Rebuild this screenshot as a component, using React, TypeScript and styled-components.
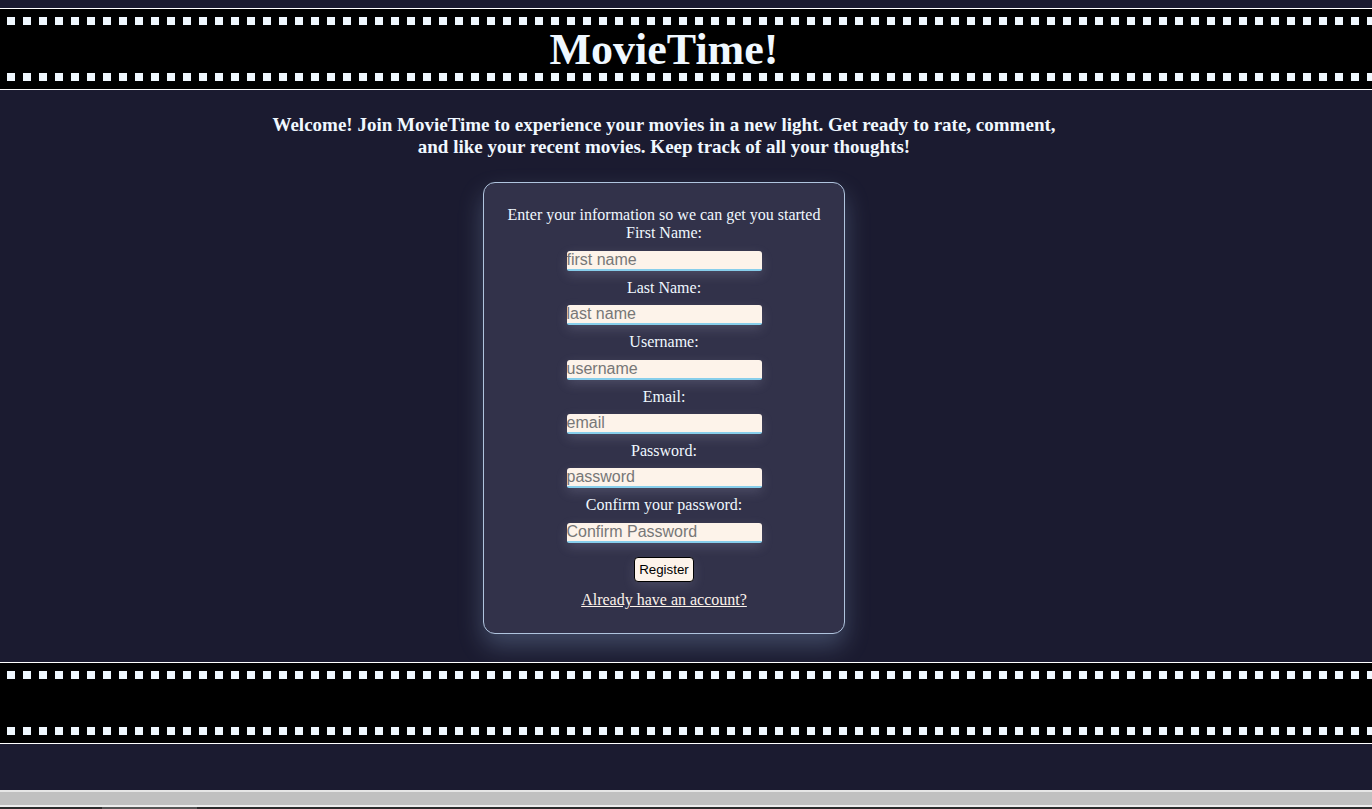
import React, { ReactElement } from "react"
import styled, { createGlobalStyle } from "styled-components"

const NAVY = "#1b1b30"
const PAPER = "#fdf3ea"
const ICE = "#f0f8ff"

const GlobalStyle = createGlobalStyle`
  html, body {
    margin: 0;
    padding: 0;
    background-color: ${NAVY};
  }
  body {
    font-family: "Liberation Serif", "Times New Roman", serif;
    color: ${ICE};
  }
`

const Page = styled.div`
  min-height: 100vh;
  display: flex;
  flex-direction: column;
  overflow: hidden;
`

// Film strip = black band with a row of sprocket holes top and bottom
const FilmStrip = styled.div<{ $offset?: number }>`
  margin-top: ${(p) => p.$offset ?? 0}px;
  height: 80px;
  border-top: 1px solid #ffffff;
  border-bottom: 1px solid #ffffff;
  background:
    linear-gradient(to right, ${ICE} 8px, transparent 8px) left 7px top 8px / 16px 8px repeat-x,
    linear-gradient(to right, ${ICE} 8px, transparent 8px) left 7px bottom 8px / 16px 8px repeat-x,
    #000000;
  display: flex;
  align-items: center;
  justify-content: center;
  padding-right: 44px;
`

const Title = styled.h1`
  margin: 0;
  font-size: 44px;
  font-weight: bold;
  color: ${ICE};
`

// Content is centred a little left of the window centre
const Main = styled.main`
  padding-right: 44px;
  display: flex;
  flex-direction: column;
  align-items: center;
`

const Welcome = styled.p`
  max-width: 790px;
  margin: 24px 0 24px;
  font-size: 19px;
  font-weight: bold;
  text-align: center;
  line-height: 22px;
`

const Card = styled.form`
  box-sizing: border-box;
  width: 362px;
  padding: 23px 20px 24px;
  border: 1px solid #b0c4de;
  border-radius: 12px;
  background-color: #32324a;
  box-shadow: 0 12px 24px rgba(150, 180, 220, 0.3);
  display: flex;
  flex-direction: column;
  align-items: center;
  text-align: center;
  font-size: 16px;
`

const Line = styled.span`
  display: block;
  line-height: 18.4px;
`

const Field = styled.input`
  box-sizing: border-box;
  width: 195px;
  height: 20px;
  margin: 8px 0;
  padding: 0;
  border: none;
  border-bottom: 2px solid #87ceeb;
  border-radius: 3px 3px 2px 2px;
  background-color: ${PAPER};
  font-family: "Liberation Sans", Arial, sans-serif;
  font-size: 16px;
  color: #222;
  box-shadow: 0 4px 12px rgba(200, 200, 230, 0.18);
  outline: none;

  &::placeholder {
    color: #777777;
  }
`

const Button = styled.button`
  margin: 6px 0 9px;
  padding: 4px 4px;
  border: 1px solid #000000;
  border-radius: 4px;
  background-color: ${PAPER};
  font-family: "Liberation Sans", Arial, sans-serif;
  font-size: 13.33px;
  color: #000000;
  box-shadow: 0 4px 12px rgba(200, 200, 230, 0.15);
  cursor: pointer;
`

const AccountLink = styled.a`
  display: block;
  line-height: 18.4px;
  color: ${PAPER};
  text-decoration: underline;
  cursor: pointer;
`

const Spacer = styled.div`
  flex: 1;
`

const Track = styled.div`
  height: 13px;
  border-top: 2px solid #e6e6e6;
  border-bottom: 2px solid #ededed;
  background-color: #c0c0c0;
`

const TrackEdge = styled.div`
  height: 2px;
  background-color: #2c2c2c;
  display: flex;
`

const Thumb = styled.div`
  margin-left: 102px;
  width: 95px;
  background-color: #555555;
`

interface FieldSpec {
  label: string
  placeholder: string
  type: string
}

const FIELDS: FieldSpec[] = [
  { label: "First Name:", placeholder: "first name", type: "text" },
  { label: "Last Name:", placeholder: "last name", type: "text" },
  { label: "Username:", placeholder: "username", type: "text" },
  { label: "Email:", placeholder: "email", type: "email" },
  { label: "Password:", placeholder: "password", type: "password" },
  { label: "Confirm your password:", placeholder: "Confirm Password", type: "password" },
]

const App = (): ReactElement => (
  <Page>
    <GlobalStyle />
    <FilmStrip $offset={8}>
      <Title>MovieTime!</Title>
    </FilmStrip>
    <Main>
      <Welcome>
        Welcome! Join MovieTime to experience your movies in a new light. Get ready to rate,
        comment, and like your recent movies. Keep track of all your thoughts!
      </Welcome>
      <Card onSubmit={(e) => e.preventDefault()}>
        <Line>Enter your information so we can get you started</Line>
        {FIELDS.map((f) => (
          <React.Fragment key={f.placeholder}>
            <Line>{f.label}</Line>
            <Field type={f.type} placeholder={f.placeholder} />
          </React.Fragment>
        ))}
        <Button type="submit">Register</Button>
        <AccountLink>Already have an account?</AccountLink>
      </Card>
    </Main>
    <FilmStrip $offset={28} />
    <Spacer />
    <Track />
    <TrackEdge>
      <Thumb />
    </TrackEdge>
  </Page>
)

export default App
